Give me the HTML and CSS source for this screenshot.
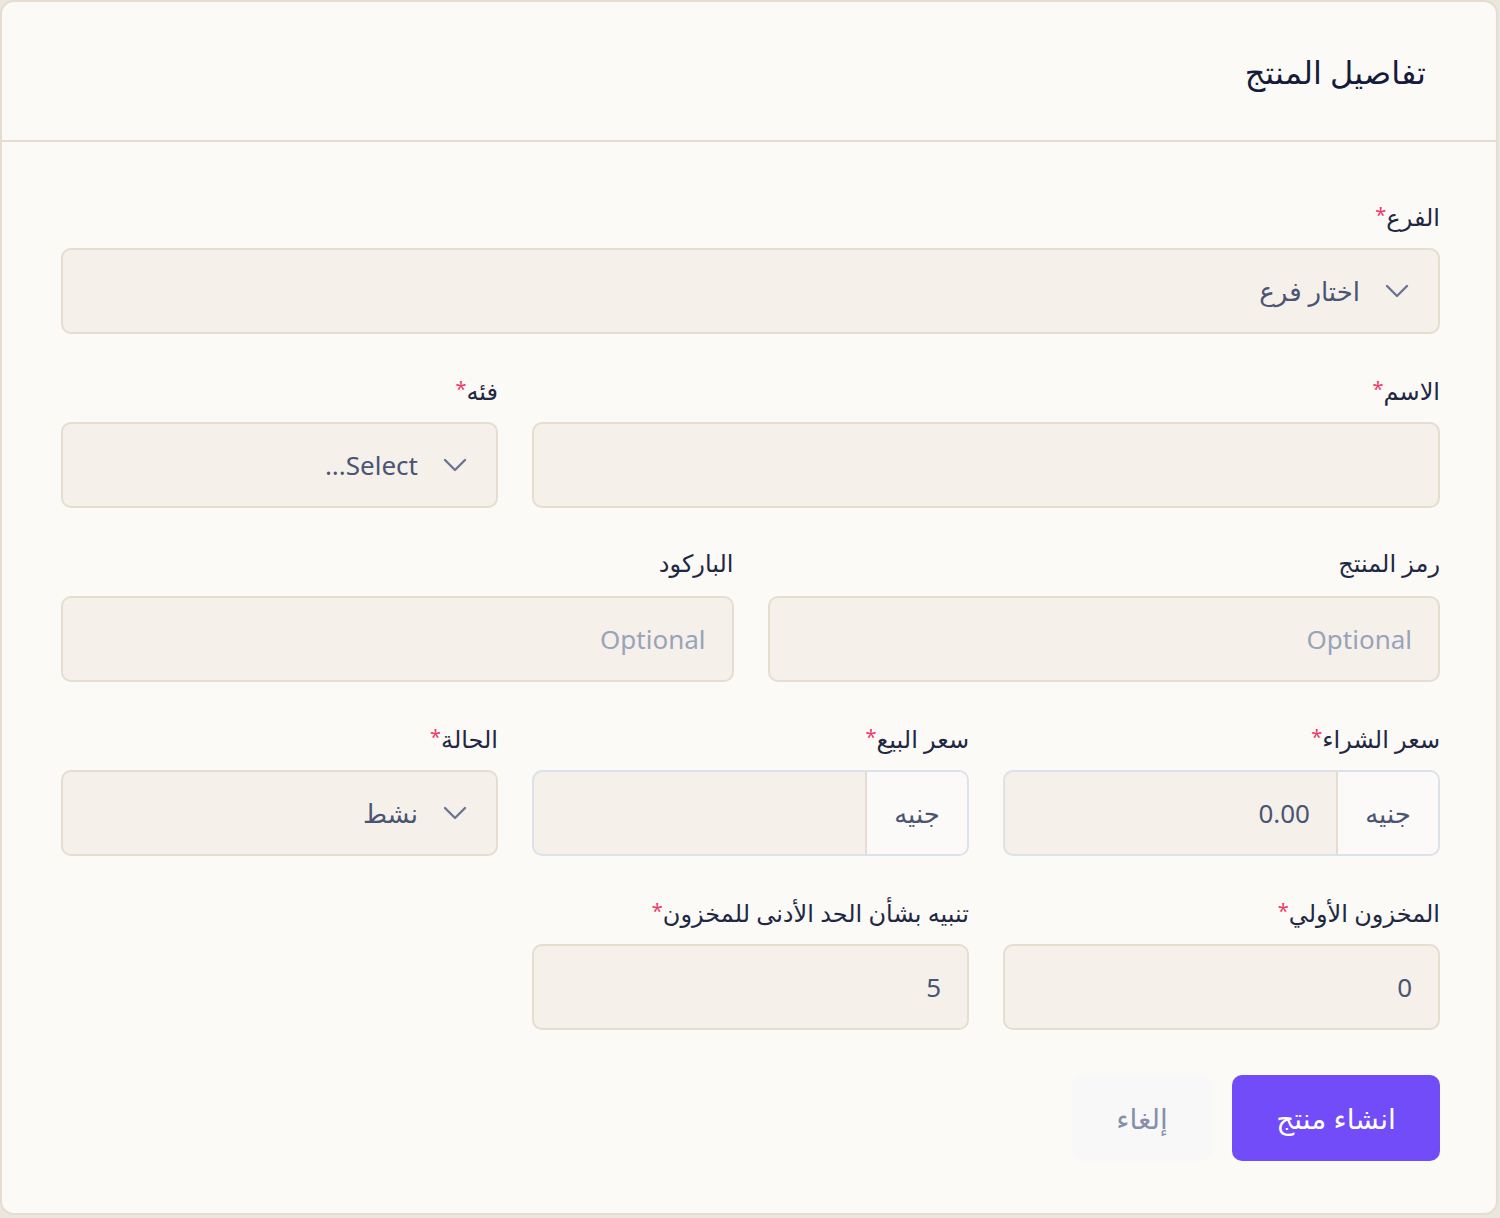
FILE: index.html
```html
<!DOCTYPE html>
<html lang="ar" dir="rtl">
<head>
  <meta charset="UTF-8" />
  <meta name="viewport" content="width=device-width, initial-scale=1.0"/>
  <title>تفاصيل المنتج</title>
  <link rel="stylesheet" href="styles.css">
</head>
<body>
  <div class="card">
    <div class="card-header">
      <h2>تفاصيل المنتج</h2>
    </div>

    <form class="card-body">
      <div class="form-grid">
        <!-- Branch -->
        <div class="field span-6">
          <label>الفرع<span class="req">*</span></label>
          <div class="control select">
            <span class="chev"><svg viewBox="0 0 24 14" width="24" height="14" fill="none" stroke="currentColor" stroke-width="2.4" stroke-linecap="round" stroke-linejoin="round"><path d="M2 2l10 10 10-10"/></svg></span>
            <span class="value">اختار فرع</span>
          </div>
        </div>

        <!-- Name / Category -->
        <div class="field span-4">
          <label>الاسم<span class="req">*</span></label>
          <div class="control"></div>
        </div>
        <div class="field span-2">
          <label>فئه<span class="req">*</span></label>
          <div class="control select">
            <span class="chev"><svg viewBox="0 0 24 14" width="24" height="14" fill="none" stroke="currentColor" stroke-width="2.4" stroke-linecap="round" stroke-linejoin="round"><path d="M2 2l10 10 10-10"/></svg></span>
            <span class="value">Select...</span>
          </div>
        </div>

        <!-- SKU / Barcode -->
        <div class="field span-3">
          <label>رمز المنتج</label>
          <div class="control"><span class="placeholder">Optional</span></div>
        </div>
        <div class="field span-3">
          <label>الباركود</label>
          <div class="control"><span class="placeholder">Optional</span></div>
        </div>

        <!-- Prices / Status -->
        <div class="field span-2">
          <label>سعر الشراء<span class="req">*</span></label>
          <div class="control addon-group">
            <span class="addon">جنيه</span>
            <span class="addon-input">0.00</span>
          </div>
        </div>
        <div class="field span-2">
          <label>سعر البيع<span class="req">*</span></label>
          <div class="control addon-group">
            <span class="addon">جنيه</span>
            <span class="addon-input"></span>
          </div>
        </div>
        <div class="field span-2">
          <label>الحالة<span class="req">*</span></label>
          <div class="control select">
            <span class="chev"><svg viewBox="0 0 24 14" width="24" height="14" fill="none" stroke="currentColor" stroke-width="2.4" stroke-linecap="round" stroke-linejoin="round"><path d="M2 2l10 10 10-10"/></svg></span>
            <span class="value">نشط</span>
          </div>
        </div>

        <!-- Stock -->
        <div class="field span-2">
          <label>المخزون الأولي<span class="req">*</span></label>
          <div class="control"><span class="value">0</span></div>
        </div>
        <div class="field span-2">
          <label>تنبيه بشأن الحد الأدنى للمخزون<span class="req">*</span></label>
          <div class="control"><span class="value">5</span></div>
        </div>
      </div>

      <div class="actions">
        <button type="button" class="btn btn-primary">انشاء منتج</button>
        <button type="button" class="btn btn-cancel">إلغاء</button>
      </div>
    </form>
  </div>
</body>
</html>
```

FILE: styles.css
```css
:root {
  --text: #1f2842;
  --muted: #4a5573;
  --field-bg: #f5f1ea;
  --field-border: #e5ddcf;
  --card-bg: #fbfaf7;
  --primary: #724cf9;
  --req: #f0386b;
}

body {
  margin: 0;
  background: #ebe6de;
  font-family: "Noto Sans", "DejaVu Sans", sans-serif;
  color: var(--text);
}

.card {
  background: var(--card-bg);
  border: 2px solid var(--field-border);
  border-radius: 14px;
  height: 1215px;
  margin-right: 2px;
  box-sizing: border-box;
  overflow: hidden;
}

.card-header {
  height: 138px;
  border-bottom: 2px solid var(--field-border);
  display: flex;
  align-items: center;
  padding: 0 70px;
}

.card-header h2 {
  margin: 0;
  font-size: 32px;
  font-weight: 400;
  color: #141c3a;
}

.card-body {
  padding: 57px 56px 0 59px;
}

.form-grid {
  display: grid;
  grid-template-columns: repeat(6, 1fr);
  column-gap: 34px;
  row-gap: 39px;
}

.span-2 { grid-column: span 2; }
.span-3 { grid-column: span 3; }
.span-4 { grid-column: span 4; }
.span-6 { grid-column: span 6; }

.field label {
  display: block;
  font-size: 24px;
  line-height: 32px;
  height: 32px;
  margin-bottom: 17px;
  color: var(--text);
}

.req {
  color: var(--req);
  font-size: 20px;
  vertical-align: 4px;
}

.control {
  height: 86px;
  box-sizing: border-box;
  background: var(--field-bg);
  border: 2px solid var(--field-border);
  border-radius: 10px;
  display: flex;
  align-items: center;
  padding: 0 26px;
  font-size: 26px;
  color: var(--muted);
}

.select {
  padding-right: 78px;
  position: relative;
}

.select .chev {
  position: absolute;
  right: 29px;
  top: 34px;
  color: #6b7594;
  display: flex;
}

.placeholder {
  color: #9aa3b8;
}

.addon-group {
  padding: 0;
  overflow: hidden;
  border-color: #dde1ea;
}

.addon {
  width: 102px;
  height: 100%;
  box-sizing: border-box;
  display: flex;
  align-items: center;
  justify-content: center;
  background: #fbfaf8;
  border-left: 2px solid var(--field-border);
}

.addon-input {
  flex: 1;
  display: flex;
  align-items: center;
  padding: 0 26px;
  border: 2px solid var(--field-border);
  border-right: none;
  border-radius: 10px 0 0 10px;
  margin: -2px 0 -2px -2px;
  height: 86px;
  box-sizing: border-box;
}

.actions {
  display: flex;
  gap: 20px;
  margin-top: 45px;
}

.btn {
  height: 86px;
  border: none;
  border-radius: 10px;
  font-family: inherit;
  font-size: 28px;
  cursor: pointer;
}

.btn-primary {
  width: 208px;
  background: var(--primary);
  color: #fff;
}

.btn-cancel {
  width: 140px;
  background: #f8f8f8;
  color: #8590a8;
}
```
